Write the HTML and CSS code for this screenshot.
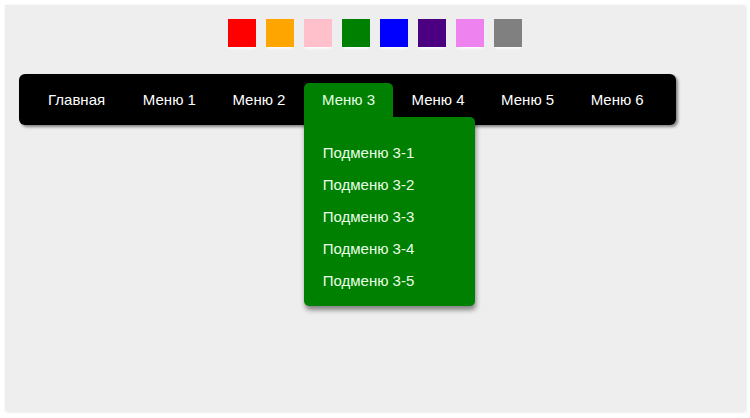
FILE: index.html
```html
<!DOCTYPE html>
<html lang="ru">
<head>
  <meta charset="UTF-8"/>
  <title>Меню</title>
  <link rel="stylesheet" href="styles.css">
</head>
<body>
  <div class="panel">
    <div class="swatches">
      <span class="swatch" style="background:red"></span>
      <span class="swatch" style="background:orange"></span>
      <span class="swatch" style="background:pink"></span>
      <span class="swatch" style="background:green"></span>
      <span class="swatch" style="background:blue"></span>
      <span class="swatch" style="background:indigo"></span>
      <span class="swatch" style="background:violet"></span>
      <span class="swatch" style="background:gray"></span>
    </div>

    <ul class="menu">
      <li><a href="#">Главная</a></li>
      <li><a href="#">Меню 1</a></li>
      <li><a href="#">Меню 2</a></li>
      <li class="open">
        <a href="#">Меню 3</a>
        <ul class="submenu">
          <li><a href="#">Подменю 3-1</a></li>
          <li><a href="#">Подменю 3-2</a></li>
          <li><a href="#">Подменю 3-3</a></li>
          <li><a href="#">Подменю 3-4</a></li>
          <li><a href="#">Подменю 3-5</a></li>
        </ul>
      </li>
      <li><a href="#">Меню 4</a></li>
      <li><a href="#">Меню 5</a></li>
      <li><a href="#">Меню 6</a></li>
    </ul>
  </div>
</body>
</html>
```

FILE: styles.css
```css
* { box-sizing:border-box; margin:0; padding:0; }
body {
  background:#fff;
  font-family:"Liberation Sans", Arial, sans-serif;
}
.panel {
  margin:5px; height:406px; padding:14px;
  background:#eee;
  box-shadow:1px 1px 3px rgba(0,0,0,0.12);
}
.swatches {
  display:flex; justify-content:center; gap:10px;
}
.swatch {
  width:28px; height:28px; display:block;
  box-shadow:0 3px 2px -1px rgba(255,255,255,0.8);
}
.menu {
  list-style:none;
  display:flex; width:fit-content;
  margin-top:27px; padding:9px 14px 8px 11px;
  background:#000; border-radius:6px;
  box-shadow:2px 2px 3px rgba(0,0,0,0.45);
}
.menu > li { position:relative; }
.menu > li > a {
  display:block; padding:0 18.25px;
  height:34px; line-height:34px;
  color:#fff; text-decoration:none; font-size:15px;
  border-radius:5px 5px 0 0;
}
.menu > li:first-child > a { padding-left:18px; padding-right:19.5px; }
.menu > li.open > a { background:#008000; color:#e6ffe6; }
.submenu {
  list-style:none;
  position:absolute; top:100%; left:0;
  width:171px; padding:20px 0 9px;
  background:#008000;
  border-radius:0 5px 5px 5px;
  box-shadow:1px 4px 5px rgba(0,0,0,0.45);
}
.submenu a {
  display:block; padding:0 19px;
  height:32px; line-height:32px;
  color:#eaffea; text-decoration:none; font-size:15px;
}
```
